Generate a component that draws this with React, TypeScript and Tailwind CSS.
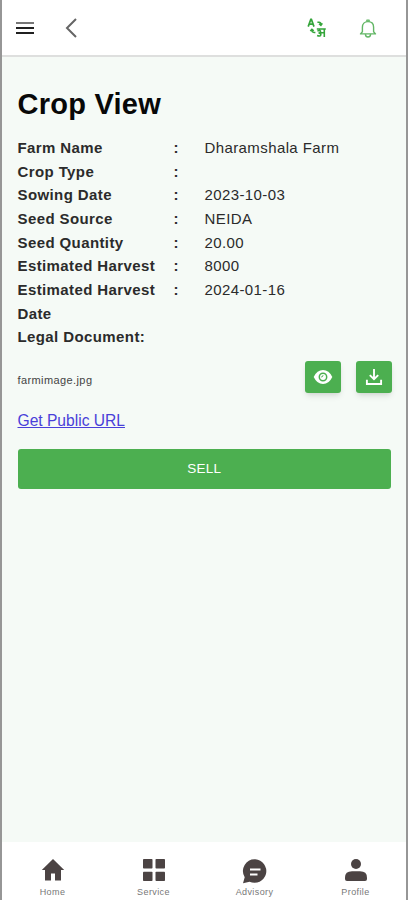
import React from "react";

const rows = [
  { label: "Farm Name", value: "Dharamshala Farm" },
  { label: "Crop Type", value: "" },
  { label: "Sowing Date", value: "2023-10-03" },
  { label: "Seed Source", value: "NEIDA" },
  { label: "Seed Quantity", value: "20.00" },
  { label: "Estimated Harvest", value: "8000" },
  { label: "Estimated Harvest Date", value: "2024-01-16" },
];

function TranslateIcon() {
  return (
    <svg width="20" height="20" viewBox="0 0 20 20" fill="none" stroke="#35a53b">
      <path d="M1.2 8.6 3.8 1.4h.6L7 8.6M2.2 6.2H6" strokeWidth="1.7" />
      <path d="M10.4 4.3h1.6q1.9 0 1.9 2.1M12 5.8l1.9 1.6 1.5-2M8.4 14.4H7q-2.2 0-2.2-2.3M3.3 12.9l1.6-1.7 1.9 1.6" strokeWidth="1.5" />
      <path d="M9.8 11h9M17.3 11v8M10.4 12.9q3.4-1 3.1.9-.2 1.3-2 1.2 2.6.1 2.3 1.8-.4 2-3.7.7M13.8 14.7h3.2" strokeWidth="1.6" />
    </svg>
  );
}

function BellIcon() {
  return (
    <svg width="18" height="20" viewBox="0 0 18 20" fill="none" stroke="#62b665" strokeWidth="1.4" strokeLinejoin="round">
      <path d="M3.4 12.8V8.3C3.4 5 5.5 2.6 9 2.6s5.6 2.4 5.6 5.7v4.5l1.9 2.1h-15Z" />
      <path d="M7.9 2.7V1.1h2.2v1.6M6.4 15.1c.2 3.8 5 3.8 5.2 0" />
    </svg>
  );
}

function EyeIcon() {
  return (
    <svg width="20" height="16" viewBox="0 0 20 16">
      <path d="M.7 8Q4 1 10 1t9.3 7Q16 15 10 15T.7 8Z" fill="white" />
      <circle cx="10" cy="8" r="3.7" fill="none" stroke="#4caf50" strokeWidth="1.5" />
      <path d="M8.2 8q1.8 0 1.8-1.8" fill="none" stroke="#4caf50" strokeWidth="1" />
    </svg>
  );
}

function DownloadIcon() {
  return (
    <svg width="18" height="18" viewBox="0 0 18 18" fill="none" stroke="white" strokeWidth="1.9">
      <path d="M9 1v10M4.8 7.1 9 11.2l4.2-4.1M1.9 11.8V16h14.2v-4.2" />
    </svg>
  );
}

function HomeIcon() {
  return (
    <svg width="24" height="22" viewBox="0 0 24 22" fill="#4b4343">
      <path d="M12 0 23.2 11H20v10.5h-6v-7h-4v7H4V11H.8Z" />
    </svg>
  );
}

function ServiceIcon() {
  return (
    <svg width="24" height="22" viewBox="0 0 24 22" fill="#4b4343">
      <rect x="1" y="0" width="9.5" height="9.5" rx=".8" />
      <rect x="13.5" y="0" width="9.5" height="9.5" rx=".8" />
      <rect x="1" y="12.7" width="9.5" height="9.3" rx=".8" />
      <rect x="13.5" y="12.7" width="9.5" height="9.3" rx=".8" />
    </svg>
  );
}

function AdvisoryIcon() {
  return (
    <svg width="26" height="25" viewBox="0 0 26 25">
      <path d="M13.3.3a11.8 11.8 0 1 1-5.7 22.5L1 24.3l1.7-6.1A11.8 11.8 0 0 1 13.3.3Z" fill="#4b4343" />
      <path d="M8 10.5h10.5M8 15.5h7.5" stroke="white" strokeWidth="2.1" />
    </svg>
  );
}

function ProfileIcon() {
  return (
    <svg width="24" height="23" viewBox="0 0 24 23" fill="#4b4343">
      <circle cx="12" cy="5" r="5" />
      <path d="M1 18.7q0-6.4 7-6.4h8q7 0 7 6.4v1.3q0 2.1-2 2.1H3q-2 0-2-2.1Z" />
    </svg>
  );
}

const tabs = [
  { label: "Home", icon: <HomeIcon /> },
  { label: "Service", icon: <ServiceIcon /> },
  { label: "Advisory", icon: <AdvisoryIcon /> },
  { label: "Profile", icon: <ProfileIcon /> },
];

export default function App() {
  return (
    <div className="flex h-[900px] w-[408px] flex-col border-r-2 border-l-2 border-[#969696] bg-[#f5faf6] font-['Liberation_Sans',Arial,sans-serif] text-[#2b2b2b]">
      <header className="flex h-[57px] shrink-0 items-center border-b-2 border-[#dedfde] bg-white pl-3.5">
        <button aria-label="Menu" className="flex w-[18px] flex-col gap-[3px]">
          <span className="h-[2px] bg-[#777]" />
          <span className="h-[2px] bg-[#202020]" />
          <span className="h-[2px] bg-[#202020]" />
        </button>
        <button aria-label="Back" className="ml-[31px]">
          <svg width="12" height="20" viewBox="0 0 12 20" fill="none" stroke="#656565" strokeWidth="2">
            <path d="M11 1 2 10l9 9" />
          </svg>
        </button>
        <div className="mr-[29px] ml-auto flex items-center gap-[32px]">
          <TranslateIcon />
          <div className="mt-0.5">
            <BellIcon />
          </div>
        </div>
      </header>

      <main className="flex-1 pt-[29px] pr-[15px] pl-[15.5px]">
        <h1 className="text-[29px] leading-[36px] font-bold tracking-[0.25px] text-[#080808]">Crop View</h1>
        <dl className="mt-[14px] text-[15px] leading-[23.65px] tracking-[0.4px]">
          {rows.map((row) => (
            <div key={row.label} className="grid grid-cols-[156px_31px_1fr]">
              <dt className="pr-3 font-bold">{row.label}</dt>
              <span className="font-bold">:</span>
              <dd>{row.value}</dd>
            </div>
          ))}
        </dl>
        <p className="text-[15px] leading-[23.65px] font-bold tracking-[0.4px]">Legal Document:</p>
        <div className="mt-3 flex h-8 items-center">
          <span className="mt-1.5 text-[11px] tracking-[0.4px] text-[#444]">farmimage.jpg</span>
          <div className="-mr-px ml-auto flex gap-[15px]">
            <button aria-label="View" className="flex h-8 w-9 items-center justify-center rounded-[3px] bg-[#4caf50] shadow-md">
              <EyeIcon />
            </button>
            <button aria-label="Download" className="flex h-8 w-9 items-center justify-center rounded-[3px] bg-[#4caf50] shadow-md">
              <DownloadIcon />
            </button>
          </div>
        </div>
        <a href="#" className="mt-[18px] block w-fit text-[15.6px] leading-5 text-[#493fd9] underline">Get Public URL</a>
        <button className="mt-[18px] flex h-10 w-full items-center justify-center rounded-[3px] bg-[#4caf50] text-[13.5px] tracking-[0.2px] text-white">SELL</button>
      </main>

      <nav className="flex h-[58px] shrink-0 bg-white">
        {tabs.map((tab) => (
          <div key={tab.label} className="flex flex-1 flex-col items-center pt-[16.5px]">
            <div className="flex h-[26px] items-start">{tab.icon}</div>
            <span className="mt-px text-[9px] leading-3 tracking-[0.4px] text-[#777]">{tab.label}</span>
          </div>
        ))}
      </nav>
    </div>
  );
}
